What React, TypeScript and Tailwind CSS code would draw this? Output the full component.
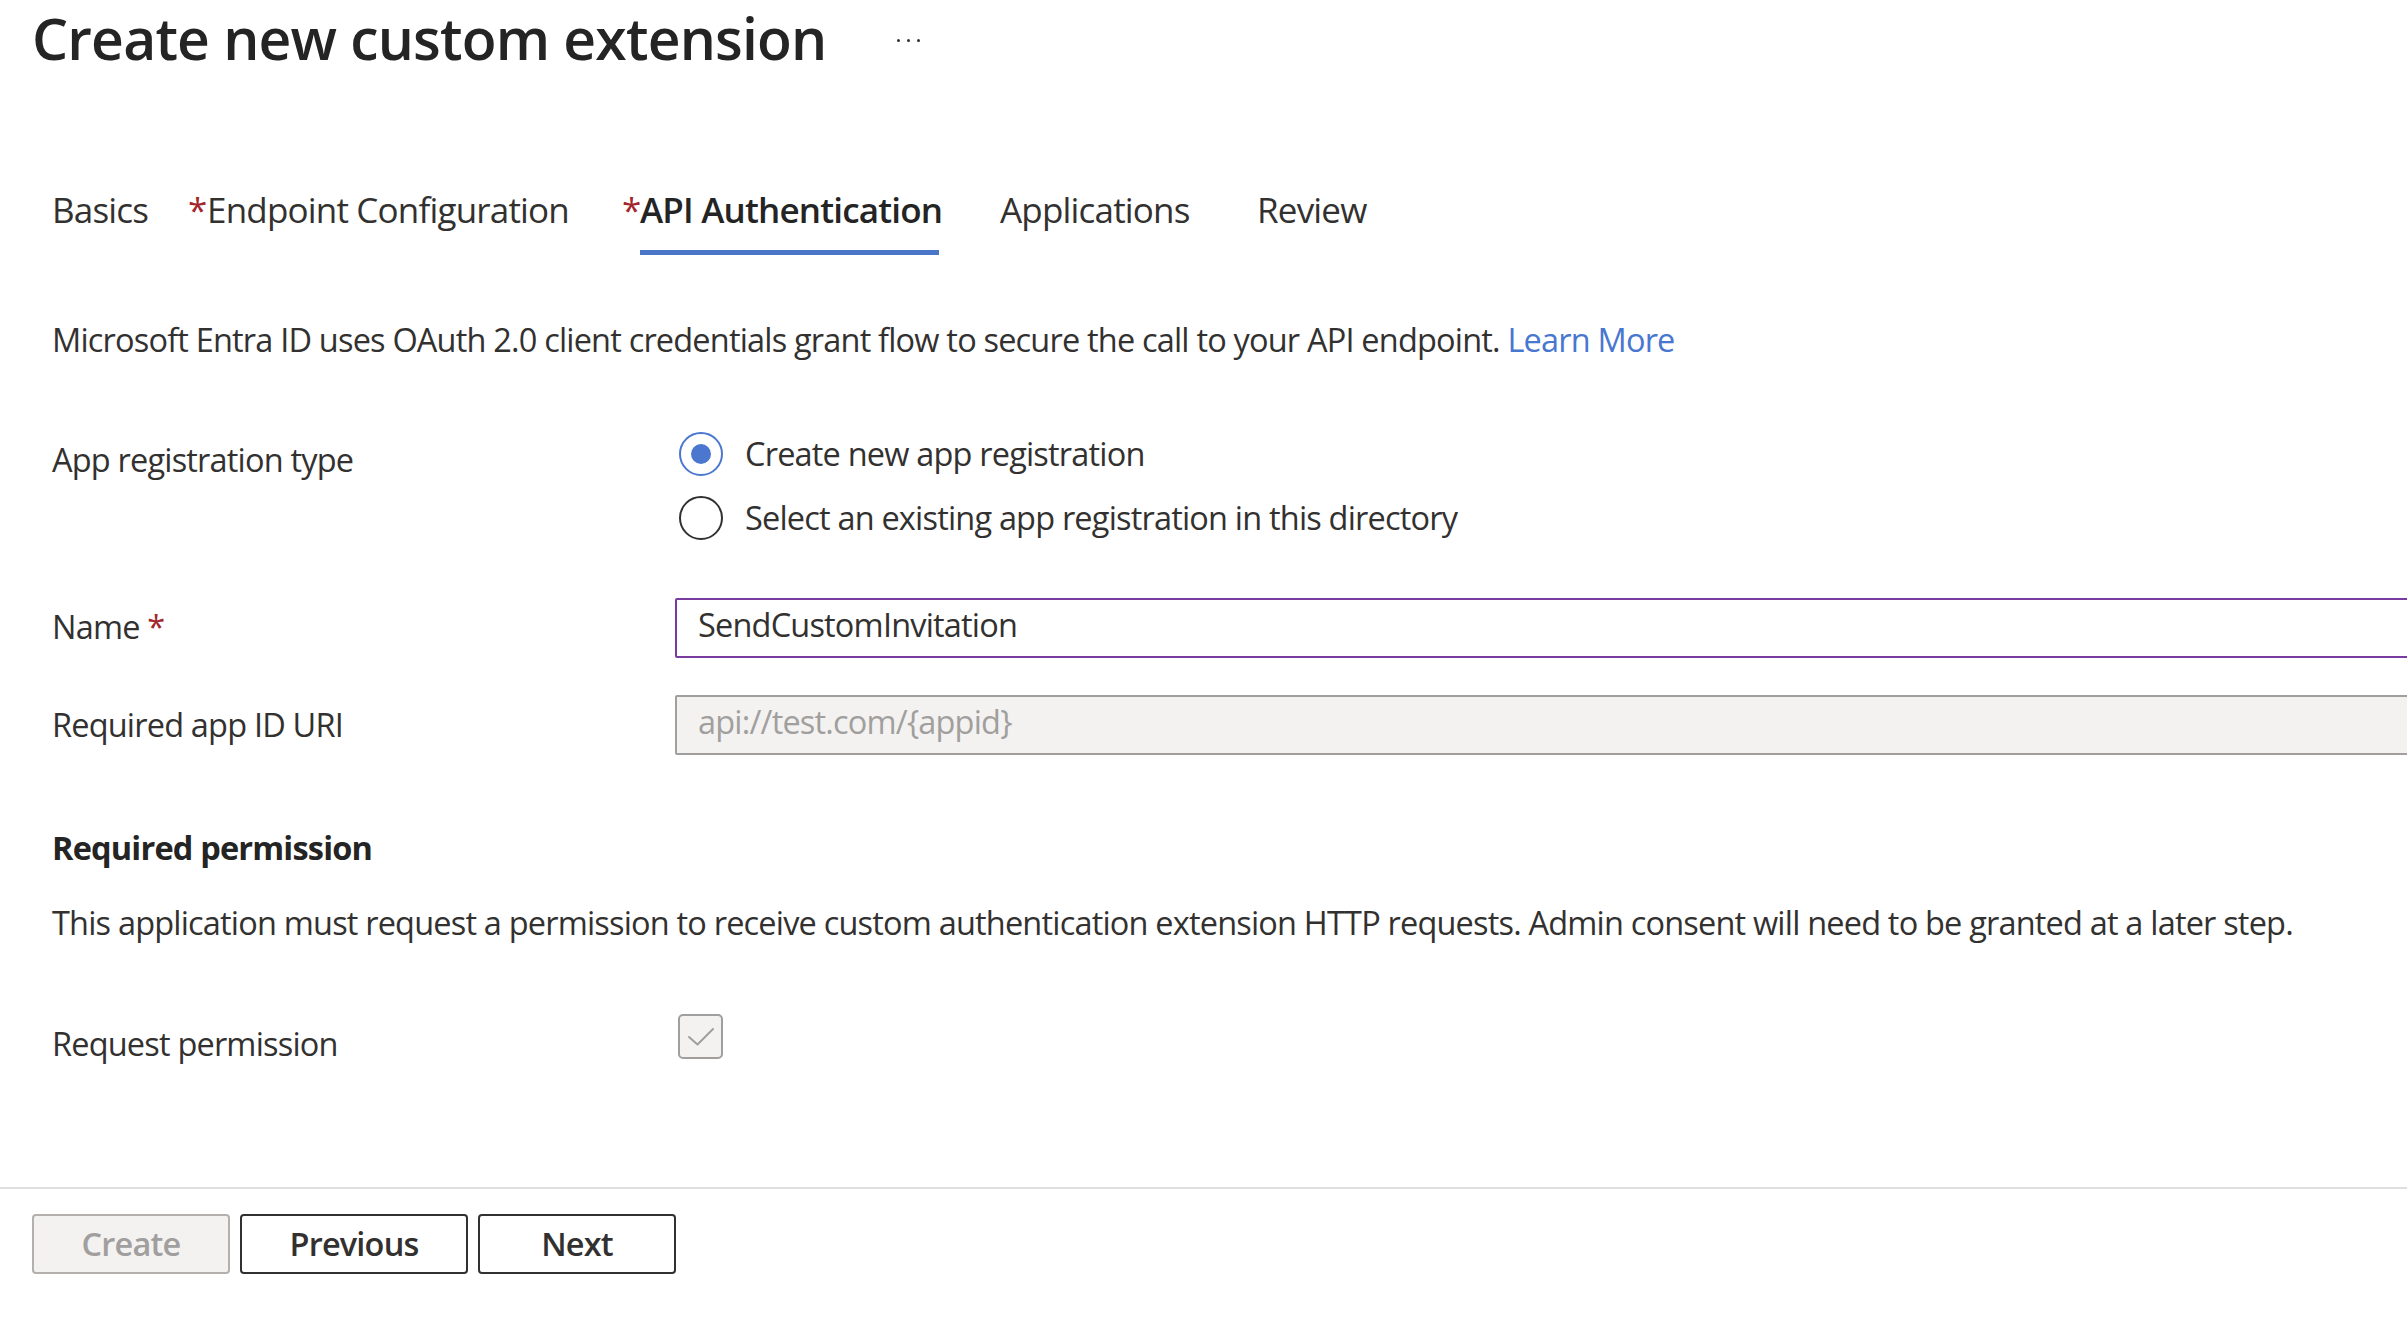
import React from "react";

function Radio({ checked, label }: { checked?: boolean; label: string }) {
  return (
    <div className="flex h-[44px] items-center whitespace-nowrap">
      <div
        className={
          checked
            ? "ml-[4px] flex h-[44px] w-[44px] shrink-0 items-center justify-center rounded-full border-2 border-[#4b77cf]"
            : "ml-[4px] flex h-[44px] w-[44px] shrink-0 items-center justify-center rounded-full border-2 border-[#323130]"
        }
      >
        {checked ? <div className="h-[20px] w-[20px] rounded-full bg-[#4b77cf]" /> : null}
      </div>
      <span className="ml-[22px] leading-[40px]">{label}</span>
    </div>
  );
}

export default function App() {
  return (
    <div className="relative h-[1330px] w-[2407px] overflow-hidden bg-white font-['Open_Sans','Noto_Sans',sans-serif] text-[32.5px] tracking-[-0.025em] text-[#323130]">
      {/* Title */}
      <div className="flex items-start pl-[32px] pt-[6px]">
        <h1 className="h-[64px] shrink-0 whitespace-nowrap text-[57px] font-semibold leading-[64px] text-[#242424]">
          Create new custom extension
        </h1>
        <div className="ml-[70px] mt-[33px] flex gap-[7px]">
          <span className="h-[3px] w-[3px] rounded-full bg-[#323130]" />
          <span className="h-[3px] w-[3px] rounded-full bg-[#323130]" />
          <span className="h-[3px] w-[3px] rounded-full bg-[#323130]" />
        </div>
      </div>

      {/* Tabs */}
      <div className="mt-[120px] flex whitespace-nowrap pl-[52px] text-[35px]">
        <div className="w-[136px] shrink-0">
          <div className="h-[40px] leading-[40px]">Basics</div>
        </div>
        <div className="flex w-[434px] shrink-0">
          <span className="w-[19px] leading-[40px] text-[#a4262c]">*</span>
          <div className="h-[40px] leading-[40px]">Endpoint Configuration</div>
        </div>
        <div className="flex w-[378px] shrink-0">
          <span className="w-[18px] leading-[40px] text-[#a4262c]">*</span>
          <div className="flex w-[299px] flex-col">
            <div className="h-[40px] font-semibold leading-[40px] text-[#242424]">API Authentication</div>
            <div className="mt-[20px] h-[5px] w-[299px] bg-[#4a76c8]" />
          </div>
        </div>
        <div className="w-[257px] shrink-0">
          <div className="h-[40px] leading-[40px]">Applications</div>
        </div>
        <div className="shrink-0">
          <div className="h-[40px] leading-[40px]">Review</div>
        </div>
      </div>

      {/* Description */}
      <p className="mt-[65px] whitespace-nowrap pl-[52px] leading-[40px]">
        Microsoft Entra ID uses OAuth 2.0 client credentials grant flow to secure the call to your API endpoint.{" "}
        <span className="text-[#4877cf]">Learn More</span>
      </p>

      {/* App registration type */}
      <div className="mt-[72px] flex pl-[52px]">
        <div className="mt-[8px] w-[623px] shrink-0 leading-[40px]">App registration type</div>
        <div className="flex flex-col gap-[20px]">
          <Radio checked label="Create new app registration" />
          <Radio label="Select an existing app registration in this directory" />
        </div>
      </div>

      {/* Name */}
      <div className="mt-[58px] flex pl-[52px]">
        <div className="mt-[9px] w-[623px] shrink-0 leading-[40px]">
          Name <span className="text-[#a4262c]">*</span>
        </div>
        <div className="h-[60px] w-[1800px] shrink-0 rounded-[2px] border-2 border-[#7a3b9f] pl-[21px] pt-[5px] leading-[40px]">
          SendCustomInvitation
        </div>
      </div>

      {/* Required app ID URI */}
      <div className="mt-[37px] flex pl-[52px]">
        <div className="mt-[10px] w-[623px] shrink-0 leading-[40px]">Required app ID URI</div>
        <div className="h-[60px] w-[1800px] shrink-0 rounded-[2px] border-2 border-[#a19f9d] bg-[#f3f2f1] pl-[21px] pt-[5px] leading-[40px] text-[#a19f9d]">
          api://test.com/&#123;appid&#125;
        </div>
      </div>

      {/* Required permission */}
      <h2 className="mt-[73px] pl-[52px] font-bold leading-[40px] text-[#242424]">Required permission</h2>
      <p className="mt-[35px] whitespace-nowrap pl-[52px] leading-[40px]">
        This application must request a permission to receive custom authentication extension HTTP requests. Admin consent will need to be granted at a later step.
      </p>

      {/* Request permission */}
      <div className="mt-[71px] flex pl-[52px]">
        <div className="mt-[10px] w-[623px] shrink-0 leading-[40px]">Request permission</div>
        <div className="ml-[3px] flex h-[45px] w-[45px] items-center justify-center rounded-[5px] border-2 border-[#a19f9d] bg-[#f3f2f1]">
          <svg width="30" height="22" viewBox="0 0 30 22" fill="none">
            <path d="M3 11 L11.5 18.5 L27 3" stroke="#a19f9d" strokeWidth="2" strokeLinecap="round" strokeLinejoin="round" />
          </svg>
        </div>
      </div>

      {/* Footer */}
      <div className="mt-[123px] border-t-2 border-[#e1dfdd] pl-[32px] pt-[25px]">
        <div className="flex gap-[10px]">
          <button className="h-[60px] w-[198px] rounded-[4px] border-2 border-[#b3b0ad] bg-[#f3f2f1] font-semibold text-[#a19f9d]">
            Create
          </button>
          <button className="h-[60px] w-[228px] rounded-[4px] border-2 border-[#323130] bg-white font-semibold text-[#323130]">
            Previous
          </button>
          <button className="h-[60px] w-[198px] rounded-[4px] border-2 border-[#323130] bg-white font-semibold text-[#323130]">
            Next
          </button>
        </div>
      </div>
    </div>
  );
}
